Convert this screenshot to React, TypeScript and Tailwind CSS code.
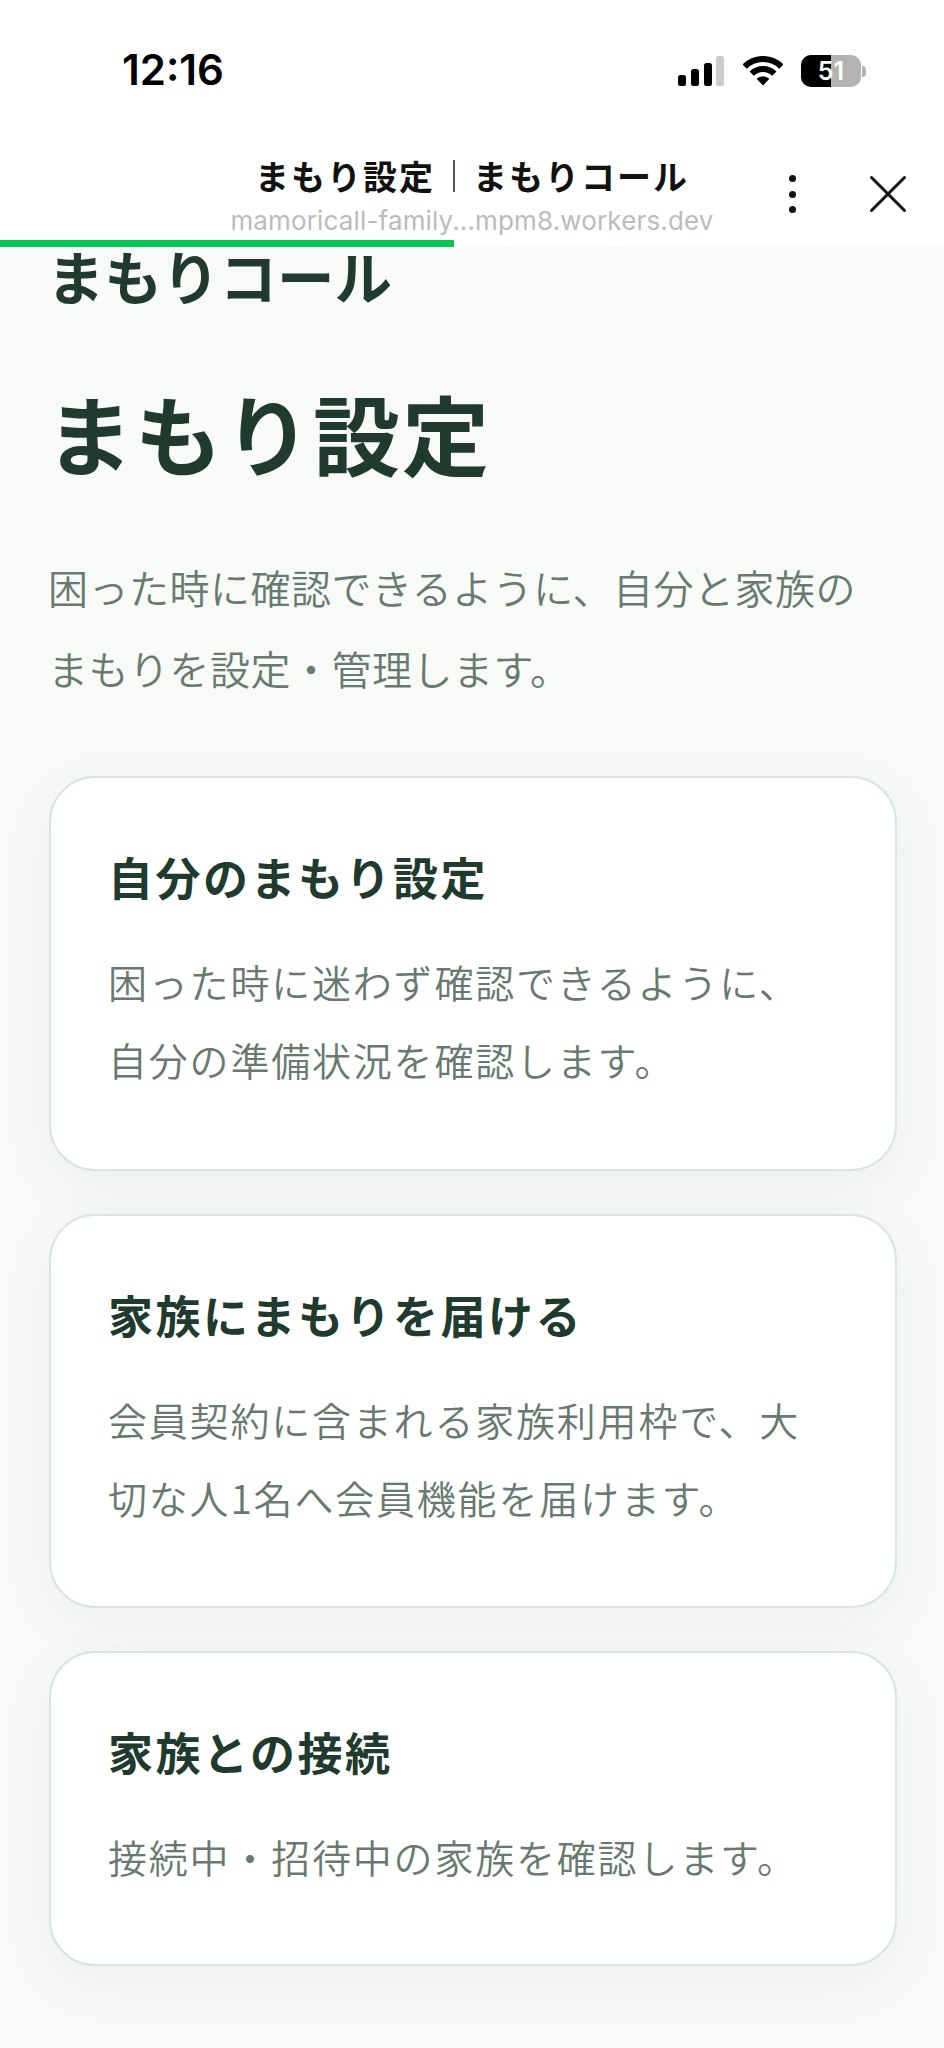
import { X } from "lucide-react";

const jp = "font-['Noto_Sans_CJK_JP','Noto_Sans',sans-serif]";

const cards = [
  { title: "自分のまもり設定", lines: ["困った時に迷わず確認できるように、", "自分の準備状況を確認します。"] },
  { title: "家族にまもりを届ける", lines: ["会員契約に含まれる家族利用枠で、大", "切な人1名へ会員機能を届けます。"] },
  { title: "家族との接続", lines: ["接続中・招待中の家族を確認します。"] },
];

function StatusIcons() {
  return (
    <div className="flex items-center">
      <svg width="46" height="30" viewBox="0 0 46 30">
        <rect x="0" y="19" width="8" height="11" rx="2.5" fill="#000" />
        <rect x="13" y="13" width="8" height="17" rx="2.5" fill="#000" />
        <rect x="26" y="7" width="8" height="23" rx="2.5" fill="#000" />
        <rect x="38" y="0" width="8" height="30" rx="2.5" fill="#ccc" />
      </svg>
      <svg className="ml-[19px] mr-[18px]" width="40" height="30" viewBox="0 0 40 30">
        <path d="M1.6 10.6 A26 26 0 0 1 38.4 10.6" fill="none" stroke="#000" strokeWidth="6" />
        <path d="M8.7 17.7 A16 16 0 0 1 31.3 17.7" fill="none" stroke="#000" strokeWidth="6" />
        <path d="M20 29.5 L13.6 22.8 A9 9 0 0 1 26.4 22.8 Z" fill="#000" />
      </svg>
      <div className="flex items-center gap-[1px]">
        <div className="relative w-[60px] h-[32px] rounded-[10px] overflow-hidden bg-[#b3b3b3] flex items-center justify-center">
          <div className="absolute left-0 top-0 bottom-0 w-[30px] bg-black" />
          <span className="relative text-white text-[25px] font-semibold leading-none font-['Inter',sans-serif]">51</span>
        </div>
        <div className="w-[4px] h-[11px] rounded-r-full bg-[#b3b3b3]" />
      </div>
    </div>
  );
}

export default function App() {
  return (
    <div className={`w-[944px] h-[2048px] overflow-hidden flex flex-col bg-[#f8faf8] ${jp}`}>
      {/* ステータスバー */}
      <div className="bg-white h-[140px] flex justify-between pl-[122px] pr-[78px] pt-[46px] items-start">
        <span className="text-[42px] leading-[48px] font-semibold text-black font-['Inter',sans-serif]">12:16</span>
        <div className="pt-[9px]">
          <StatusIcons />
        </div>
      </div>

      {/* ヘッダー */}
      <div className="bg-white h-[100px] grid grid-cols-[1fr_auto_1fr] items-start">
        <div />
        <div className="flex flex-col items-center pt-[17px]">
          <div className="flex items-center text-[34px] leading-[40px] font-bold text-[#111] h-[38px] tracking-[2px]">
            <span>まもり設定</span>
            <span className="w-[2px] h-[32px] bg-[#555] mx-[18px]" />
            <span>まもりコール</span>
          </div>
          <div className="text-[26px] leading-[32px] mt-[10px] text-[#bbb] tracking-[0.15px] font-['Inter',sans-serif]">mamoricall-family...mpm8.workers.dev</div>
        </div>
        <div className="flex justify-end items-center pt-[21px] pr-[23px] gap-[59px]">
          <div className="flex flex-col gap-[8.5px]">
            <span className="w-[7px] h-[7px] rounded-full bg-[#111]" />
            <span className="w-[7px] h-[7px] rounded-full bg-[#111]" />
            <span className="w-[7px] h-[7px] rounded-full bg-[#111]" />
          </div>
          <X size={66} strokeWidth={1.1} color="#111" />
        </div>
      </div>
      <div className="h-[7px] bg-white">
        <div className="h-[7px] w-[454px] bg-[#06c755]" />
      </div>

      {/* 本文 */}
      <div className="pl-[48px] pr-[47px]">
        <div className="-ml-[1px] text-[57.5px] leading-[56px] font-bold text-[#213a2e] h-[60px]">まもりコール</div>
        <h1 className="-ml-[2px] mt-[70px] text-[87px] leading-[110px] font-bold text-[#213a2e] tracking-[2px]">まもり設定</h1>
        <p className="mt-[60px] text-[40px] leading-[81px] font-[350] text-[#68796f] tracking-[0.5px]">
          困った時に確認できるように、自分と家族の
          <br />
          まもりを設定・管理します。
        </p>
        <div className="mt-[67px] ml-[1px] flex flex-col gap-[43px]">
          {cards.map((c) => (
            <div key={c.title} className="bg-white rounded-[46px] border-2 border-[#d9e5de] px-[57px] pt-[71px] pb-[70.5px] last:pb-[69px] shadow-[0_16px_60px_rgba(30,60,45,0.06)]">
              <h2 className="text-[45px] leading-[56px] font-bold text-[#213a2e] tracking-[2.5px]">{c.title}</h2>
              <p className="mt-[37px] text-[39px] leading-[78px] font-[350] text-[#68796f] tracking-[1.8px]">
                {c.lines.map((l) => (
                  <span key={l} className="block">{l}</span>
                ))}
              </p>
            </div>
          ))}
        </div>
      </div>
    </div>
  );
}
